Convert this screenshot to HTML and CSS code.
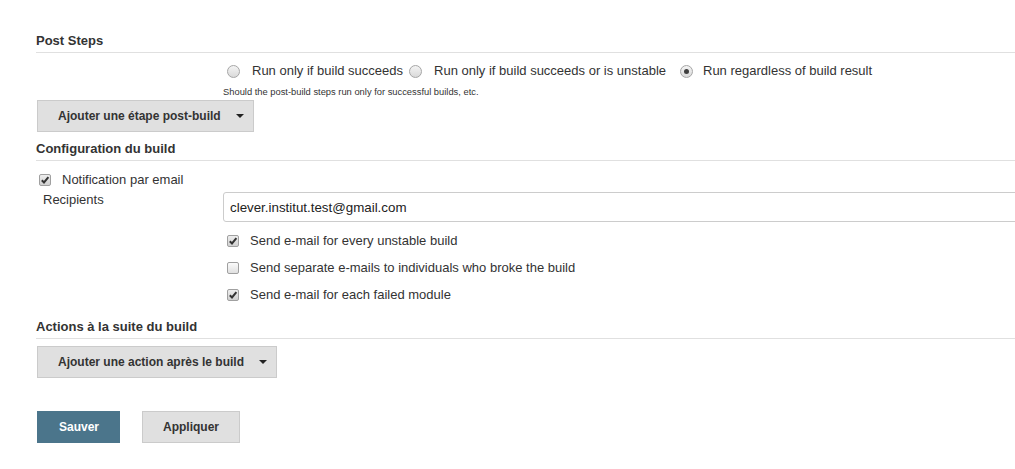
FILE: index.html
```html
<!DOCTYPE html>
<html lang="fr">
<head>
<meta charset="utf-8">
<title>Configuration</title>
<link rel="stylesheet" href="styles.css">
</head>
<body>
<div class="page">
  <div class="section-header">Post Steps</div>

  <div class="row radio-row">
    <div class="cell-label"></div>
    <div class="cell-field radios">
      <label class="radio-item"><span class="radio"></span>Run only if build succeeds</label>
      <label class="radio-item"><span class="radio"></span>Run only if build succeeds or is unstable</label>
      <label class="radio-item radio-last"><span class="radio checked"></span>Run regardless of build result</label>
    </div>
  </div>
  <div class="row help-row">
    <div class="cell-label"></div>
    <div class="cell-field help">Should the post-build steps run only for successful builds, etc.</div>
  </div>

  <button class="btn btn-grey btn-menu btn-first" type="button">Ajouter une étape post-build<svg class="caret" width="8" height="4" viewBox="0 0 8 4"><path d="M0 0H8L4 4Z" fill="#222"/></svg></button>

  <div class="section-header header-config">Configuration du build</div>

  <label class="check-row notify-row"><span class="checkbox checked"><svg width="10" height="10" viewBox="0 0 10 10"><path d="M1.8 5.2 L4 7.4 L8.4 2.2" fill="none" stroke="#333" stroke-width="2"/></svg></span>Notification par email</label>

  <div class="row recipients-row">
    <div class="cell-label recipients-label">Recipients</div>
    <div class="cell-field"><input class="text-input" type="text" value="clever.institut.test@gmail.com"></div>
  </div>

  <div class="row option-row first-option">
    <div class="cell-label"></div>
    <label class="cell-field option"><span class="checkbox checked"><svg width="10" height="10" viewBox="0 0 10 10"><path d="M1.8 5.2 L4 7.4 L8.4 2.2" fill="none" stroke="#333" stroke-width="2"/></svg></span>Send e-mail for every unstable build</label>
  </div>
  <div class="row option-row">
    <div class="cell-label"></div>
    <label class="cell-field option"><span class="checkbox"></span>Send separate e-mails to individuals who broke the build</label>
  </div>
  <div class="row option-row">
    <div class="cell-label"></div>
    <label class="cell-field option"><span class="checkbox checked"><svg width="10" height="10" viewBox="0 0 10 10"><path d="M1.8 5.2 L4 7.4 L8.4 2.2" fill="none" stroke="#333" stroke-width="2"/></svg></span>Send e-mail for each failed module</label>
  </div>

  <div class="section-header header-actions">Actions à la suite du build</div>

  <button class="btn btn-grey btn-menu btn-actions" type="button">Ajouter une action après le build<svg class="caret" width="8" height="4" viewBox="0 0 8 4"><path d="M0 0H8L4 4Z" fill="#222"/></svg></button>

  <div class="bottom-buttons">
    <button class="btn btn-primary btn-save" type="button">Sauver</button>
    <button class="btn btn-grey" type="button">Appliquer</button>
  </div>
</div>
</body>
</html>
```

FILE: styles.css
```css
* {
  box-sizing: border-box;
}

html, body {
  margin: 0;
  padding: 0;
  background: #ffffff;
  overflow: hidden;
}

body {
  font-family: "Liberation Sans", Arial, sans-serif;
  font-size: 13px;
  color: #333333;
}

.page {
  width: 1060px;
  padding: 33px 0 40px 36px;
}

.section-header {
  font-weight: bold;
  font-size: 13px;
  line-height: 16px;
  padding-bottom: 3px;
  border-bottom: 1px solid #e0e0e0;
  color: #333333;
}

.header-config {
  margin-top: 9px;
}

.header-actions {
  margin-top: 16px;
}

.row {
  display: grid;
  grid-template-columns: 187px 1fr;
}

.radio-row {
  margin-top: 10px;
  line-height: 16px;
}

.radios {
  display: flex;
  align-items: center;
}

.radio-item {
  display: flex;
  align-items: center;
  margin-right: 2px;
}

.radio-last {
  margin-left: 8px;
}

.radio {
  width: 13px;
  height: 13px;
  border-radius: 50%;
  border: 1px solid #a6a6a6;
  background: linear-gradient(#f4f4f4, #d9d9d9);
  margin: 0 12px 0 4px;
  display: flex;
  align-items: center;
  justify-content: center;
}

.radio-last .radio {
  margin-right: 10px;
}

.radio.checked::after {
  content: "";
  width: 5px;
  height: 5px;
  border-radius: 50%;
  background: #3f3f3f;
}

.help-row {
  margin-top: 7px;
}

.help {
  font-size: 9.35px;
  line-height: 12px;
  color: #333333;
}

.btn {
  font-family: "Liberation Sans", Arial, sans-serif;
  font-weight: bold;
  font-size: 12px;
  height: 32px;
  border: 1px solid #cbcbcb;
  padding: 0 20px;
  display: flex;
  align-items: center;
  cursor: pointer;
}

.btn-grey {
  background: #e0e0e0;
  color: #333333;
}

.btn-primary {
  background: #4b758b;
  border-color: #4b758b;
  color: #ffffff;
}

.btn-save {
  padding: 0 20px 0 21px;
}

.btn-menu {
  padding: 0 9px 0 20px;
  margin-left: 1px;
}

.caret {
  margin-left: 15px;
  display: block;
}

.btn-first {
  margin-top: 2px;
}

.btn-actions {
  margin-top: 7px;
}

.check-row {
  display: flex;
  align-items: center;
  line-height: 16px;
}

.notify-row {
  margin-top: 11px;
}

.notify-row .checkbox {
  margin: 0 11px 0 3px;
}

.checkbox {
  width: 12px;
  height: 12px;
  border: 1px solid #a0a0a0;
  border-radius: 2px;
  background: linear-gradient(#fbfbfb, #e0e0e0);
  display: flex;
  align-items: center;
  justify-content: center;
  flex: none;
}

.checkbox.checked {
  background: linear-gradient(#eeeeee, #d0d0d0);
}

.recipients-row {
  margin-top: 4px;
}

.recipients-label {
  padding-left: 7px;
  line-height: 16px;
}

.text-input {
  display: block;
  width: 860px;
  height: 30px;
  border: 1px solid #cccccc;
  border-radius: 3px;
  padding: 0 0 0 6px;
  font-family: "Liberation Sans", Arial, sans-serif;
  font-size: 13.33px;
  color: #222222;
  background: #ffffff;
  outline: none;
}

.option-row {
  margin-top: 11px;
  line-height: 16px;
}

.first-option {
  margin-top: 11px;
}

.option {
  display: flex;
  align-items: center;
}

.option .checkbox {
  margin: 0 11px 0 4px;
}

.bottom-buttons {
  margin-top: 33px;
  margin-left: 1px;
  display: flex;
  gap: 22px;
}
```
